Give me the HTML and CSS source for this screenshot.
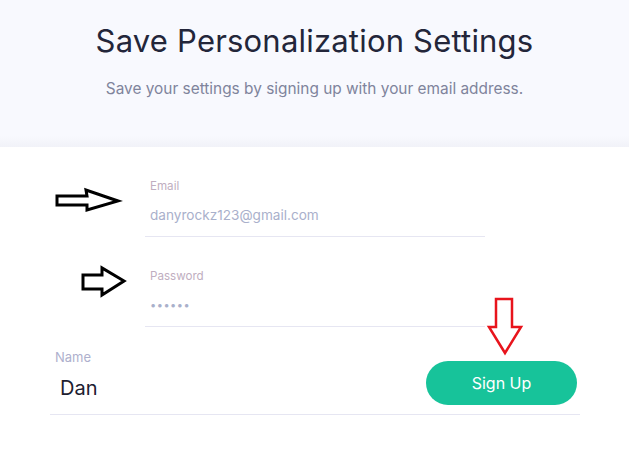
FILE: index.html
```html
<!DOCTYPE html>
<html lang="en">
<head>
<meta charset="utf-8">
<title>Save Personalization Settings</title>
<link rel="stylesheet" href="styles.css">
</head>
<body>
<header class="hero">
  <h1 class="hero-title">Save Personalization Settings</h1>
  <p class="hero-sub">Save your settings by signing up with your email address.</p>
</header>
<main class="form">
  <div class="creds">
    <div class="field">
      <span class="label label-pink">Email</span>
      <div class="value">danyrockz123@gmail.com</div>
    </div>
    <div class="field field-next">
      <span class="label label-pink">Password</span>
      <div class="value value-dots">••••••</div>
    </div>
  </div>
  <div class="name-row">
    <div class="name-field">
      <span class="label label-blue">Name</span>
      <div class="name-value">Dan</div>
    </div>
    <button class="signup" type="button">Sign Up</button>
  </div>
</main>
<svg class="marks" width="629" height="455" viewBox="0 0 629 455" aria-hidden="true">
  <polygon points="57,196 87,196 86,190 118,201 87,210 87,205 57,205" fill="none" stroke="#000" stroke-width="3" stroke-linejoin="miter"/>
  <polygon points="83,275 102,275 102,268 124,281 102,295 102,289 83,289" fill="none" stroke="#000" stroke-width="3" stroke-linejoin="miter"/>
  <polygon points="496,299 512,299 512,327 521,327 505,353 489,327 496,327" fill="none" stroke="#e8141c" stroke-width="2.5" stroke-linejoin="miter"/>
</svg>
</body>
</html>
```
FILE: styles.css
```css
* { box-sizing: border-box; }
html, body { margin: 0; padding: 0; background: #ffffff; }
body {
  width: 629px;
  height: 455px;
  overflow: hidden;
  position: relative;
  font-family: "Inter", "Roboto", "Liberation Sans", sans-serif;
}
.hero {
  height: 147px;
  background: linear-gradient(#f8f9fe 0, #f8f9fe 136px, #f1f2f8 147px);
  text-align: center;
  padding-top: 21px;
}
.hero-title {
  margin: 0;
  font-size: 31px;
  line-height: 40px;
  font-weight: 400;
  color: #23263a;
  letter-spacing: 0.2px;
}
.hero-sub {
  margin: 18px 0 0;
  font-size: 15.4px;
  line-height: 20px;
  color: #7f849c;
}
.form { padding-top: 32px; }
.creds { margin-left: 145px; width: 340px; }
.field {
  border-bottom: 1px solid #e6e6f2;
  padding: 0 0 11px 5px;
}
.field-next { margin-top: 32px; }
.label {
  display: block;
  font-size: 11.6px;
  line-height: 14px;
}
.label-pink { color: #c0aec0; }
.label-blue { color: #aeb0cd; font-size: 13px; }
.value {
  margin-top: 12px;
  font-size: 13.6px;
  line-height: 20px;
  color: #a9b0cb;
}
.value-dots { letter-spacing: 0.5px; font-size: 11px; }
.name-row {
  margin: 23px 49px 0 50px;
  display: flex;
  justify-content: space-between;
  align-items: flex-start;
  border-bottom: 1px solid #e6e6f2;
  padding-bottom: 9px;
}
.name-field { padding-left: 5px; }
.name-value {
  margin-top: 12px;
  padding-left: 5px;
  font-size: 20px;
  line-height: 24px;
  color: #1d2030;
}
.signup {
  margin-top: 11px;
  margin-right: 3px;
  width: 151px;
  height: 44px;
  border: none;
  border-radius: 22px;
  background: #17c39a;
  color: #ffffff;
  font-family: inherit;
  font-size: 16px;
  padding: 0;
}
.marks {
  position: absolute;
  left: 0;
  top: 0;
  pointer-events: none;
}
```
